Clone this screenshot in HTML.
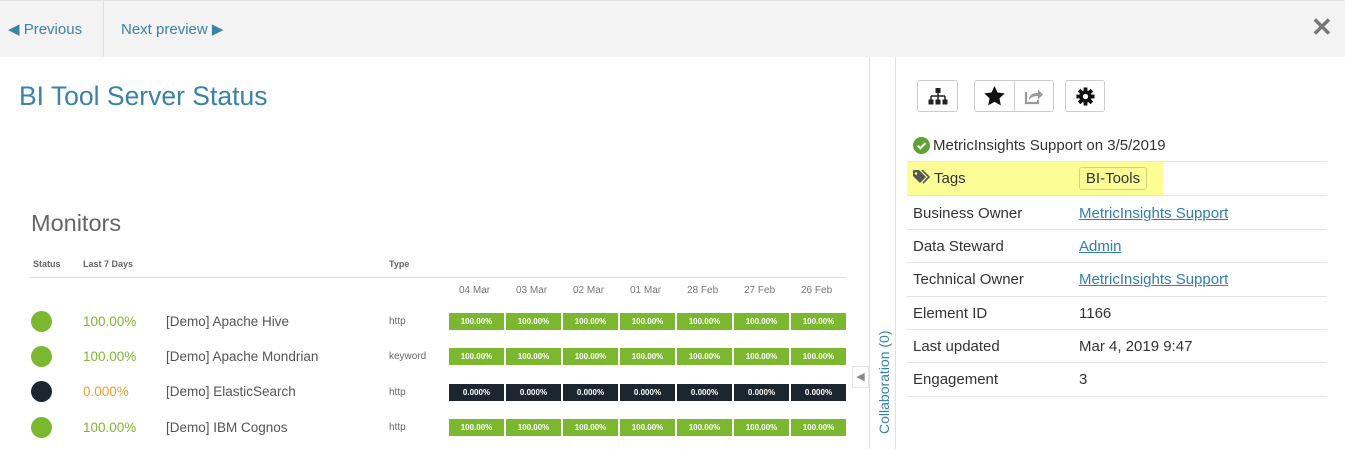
<!DOCTYPE html>
<html><head><style>
*{margin:0;padding:0;box-sizing:border-box}
body{width:1345px;height:449px;overflow:hidden;background:#fff;font-family:"Liberation Sans",sans-serif;position:relative}
.abs{position:absolute}
.hdr{left:0;top:0;width:1345px;height:57px;background:#f3f3f3;border-top:1px solid #e2e2e2}
.nav{color:#3a82a8;font-size:15px;top:20px}
.cell{position:absolute;width:55px;height:17px;color:#fff;font-size:8px;font-weight:bold;text-align:center;line-height:17px}
.g{background:#7cb82f}.d{background:#1c2630}
.dot{position:absolute;left:31px;width:21px;height:21px;border-radius:50%}
.row{position:absolute;left:907px;width:420px;height:1px;background:#e4e4e4}
.lbl{position:absolute;left:913px;font-size:15px;color:#333}
.val{position:absolute;left:1079px;font-size:15px;color:#333}
.lnk{color:#2f7fb0;text-decoration:underline}
.btn{position:absolute;top:80px;height:32px;border:1px solid #ccc;border-radius:3px;background:#fff}
.nm{position:absolute;left:166px;font-size:13.5px;color:#555}
.ty{position:absolute;left:389px;font-size:10px;color:#666}
</style></head><body>
<div class="abs hdr"></div>
<div class="abs" style="left:103px;top:1px;width:1px;height:56px;background:#e0e0e0"></div>
<div class="abs nav" style="left:8px">◀ Previous</div>
<div class="abs nav" style="left:121px">Next preview ▶</div>
<div class="abs" style="left:1311px;top:12px;font-size:26px;color:#777;font-weight:bold">✕</div>

<div class="abs" style="left:19px;top:81px;font-size:26.5px;color:#3a82a8">BI Tool Server Status</div>

<div class="abs" style="left:31px;top:210px;font-size:23.5px;color:#666">Monitors</div>
<div class="abs" style="left:33px;top:259px;font-size:9px;font-weight:bold;color:#666">Status</div>
<div class="abs" style="left:83px;top:259px;font-size:9px;font-weight:bold;color:#666">Last 7 Days</div>
<div class="abs" style="left:389px;top:259px;font-size:9px;font-weight:bold;color:#666">Type</div>
<div class="abs" style="left:30px;top:277px;width:816px;height:1px;background:#ddd"></div>
<div class="abs" style="left:449px;top:285px;width:397px;font-size:10px;color:#777">
<span class="abs" style="left:10px">04 Mar</span><span class="abs" style="left:67px">03 Mar</span><span class="abs" style="left:124px">02 Mar</span><span class="abs" style="left:181px">01 Mar</span><span class="abs" style="left:238px">28 Feb</span><span class="abs" style="left:295px">27 Feb</span><span class="abs" style="left:352px">26 Feb</span></div>

<div class="dot" style="top:311px;background:#7cb82f"></div>
<div class="dot" style="top:346px;background:#7cb82f"></div>
<div class="dot" style="top:381px;background:#1c2630"></div>
<div class="dot" style="top:417px;background:#7cb82f"></div>
<div class="abs" style="left:83px;top:314px;font-size:13.5px;color:#7cb82f">100.00%</div>
<div class="abs" style="left:83px;top:349px;font-size:13.5px;color:#7cb82f">100.00%</div>
<div class="abs" style="left:83px;top:384px;font-size:13.5px;color:#f39a2b">0.000%</div>
<div class="abs" style="left:83px;top:420px;font-size:13.5px;color:#7cb82f">100.00%</div>
<div class="nm" style="top:314px">[Demo] Apache Hive</div>
<div class="nm" style="top:349px">[Demo] Apache Mondrian</div>
<div class="nm" style="top:384px">[Demo] ElasticSearch</div>
<div class="nm" style="top:420px">[Demo] IBM Cognos</div>
<div class="ty" style="top:316px">http</div>
<div class="ty" style="top:351px">keyword</div>
<div class="ty" style="top:387px">http</div>
<div class="ty" style="top:422px">http</div>

<div id="bars"></div>
<script>
var ys=[313,348,384,419],cls=['g','g','d','g'],t=['100.00%','100.00%','0.000%','100.00%'],h='';
for(var r=0;r<4;r++)for(var c=0;c<7;c++)h+='<div class="cell '+cls[r]+'" style="left:'+(449+c*57)+'px;top:'+ys[r]+'px">'+t[r]+'</div>';
document.getElementById('bars').innerHTML=h;
</script>

<div class="abs" style="left:869px;top:57px;width:1px;height:392px;background:#e0e0e0"></div>
<div class="abs" style="left:895px;top:57px;width:1px;height:392px;background:#e0e0e0"></div>
<div class="abs" style="left:852px;top:366px;width:17px;height:22px;background:#fff;border:1px solid #e6e6e6;color:#888;font-size:11px;line-height:20px;text-align:center">◀</div>
<div class="abs" style="left:876px;top:434px;transform:rotate(-90deg);transform-origin:0 0;font-size:14px;color:#3a82a8;white-space:nowrap;width:120px">Collaboration (0)</div>

<div class="btn" style="left:917px;width:41px"><svg class="abs" style="left:10px;top:7px" width="20" height="17" viewBox="0 0 20 17"><rect x="7.5" y="0" width="5" height="5" fill="#222"/><path d="M10 5v3M3 8h14M3 8v4M10 8v4M17 8v4" stroke="#222" stroke-width="1.5" fill="none"/><rect x="0.5" y="11.5" width="5" height="5" fill="#222"/><rect x="7.5" y="11.5" width="5" height="5" fill="#222"/><rect x="14.5" y="11.5" width="5" height="5" fill="#222"/></svg></div>
<div class="btn" style="left:974px;width:80px"><div class="abs" style="left:39px;top:0;width:1px;height:30px;background:#ccc"></div>
<svg class="abs" style="left:9px;top:5px" width="21" height="20" viewBox="0 0 24 23"><path d="M12 0l3.5 7.5 8.2 1-6 5.7 1.6 8.1L12 18.3l-7.3 4 1.6-8.1-6-5.7 8.2-1z" fill="#111"/></svg>
<svg class="abs" style="left:49px;top:6px" width="20" height="18" viewBox="0 0 20 18"><path d="M2 5v11h12v-3" stroke="#999" stroke-width="2.2" fill="none"/><path d="M5 13c0-6 5-7 9-7V2.5l5 5-5 5V9c-4 0-7 1-9 4z" fill="#999"/></svg></div>
<div class="btn" style="left:1065px;width:40px"><svg class="abs" style="left:10px;top:6px" width="19" height="19" viewBox="0 0 20 20"><g fill="#111"><circle cx="10" cy="10" r="6.5"/><rect x="8" y="0.5" width="4" height="19"/><rect x="0.5" y="8" width="19" height="4"/><rect x="8" y="0.5" width="4" height="19" transform="rotate(45 10 10)"/><rect x="8" y="0.5" width="4" height="19" transform="rotate(-45 10 10)"/></g><circle cx="10" cy="10" r="2.8" fill="#fff"/></svg></div>

<svg class="abs" style="left:913px;top:137px" width="17" height="17"><circle cx="8.5" cy="8.5" r="8.5" fill="#5ea336"/><path d="M4.8 8.7l2.6 2.6 5-5.2" stroke="#fff" stroke-width="2" fill="none"/></svg>
<div class="abs" style="left:933px;top:137px;font-size:15px;color:#333">MetricInsights Support on 3/5/2019</div>
<div class="row" style="top:161px"></div>
<div class="abs" style="left:907px;top:162px;width:256px;height:33px;background:#fdfd96"></div>
<svg class="abs" style="left:913px;top:170px" width="18" height="15" viewBox="0 0 18 15"><path d="M0 1v5l7 7 6-6-7-7H1z" fill="#555"/><circle cx="3" cy="3.5" r="1.3" fill="#fdfd96"/><path d="M9 0l7 7-6 6" stroke="#555" stroke-width="1.6" fill="none"/></svg>
<div class="lbl" style="left:934px;top:170px">Tags</div>
<div class="abs" style="left:1079px;top:167px;width:68px;height:23px;border:1px solid #d4d47a;border-radius:3px;font-size:15px;color:#333;text-align:center;line-height:21px">BI-Tools</div>
<div class="row" style="top:195px"></div>
<div class="lbl" style="top:205px">Business Owner</div><div class="val lnk" style="top:205px">MetricInsights Support</div>
<div class="row" style="top:229px"></div>
<div class="lbl" style="top:238px">Data Steward</div><div class="val lnk" style="top:238px">Admin</div>
<div class="row" style="top:262px"></div>
<div class="lbl" style="top:271px">Technical Owner</div><div class="val lnk" style="top:271px">MetricInsights Support</div>
<div class="row" style="top:296px"></div>
<div class="lbl" style="top:305px">Element ID</div><div class="val" style="top:305px">1166</div>
<div class="row" style="top:329px"></div>
<div class="lbl" style="top:338px">Last updated</div><div class="val" style="top:338px">Mar 4, 2019 9:47</div>
<div class="row" style="top:362px"></div>
<div class="lbl" style="top:371px">Engagement</div><div class="val" style="top:371px">3</div>
<div class="row" style="top:396px"></div>
</body></html>
